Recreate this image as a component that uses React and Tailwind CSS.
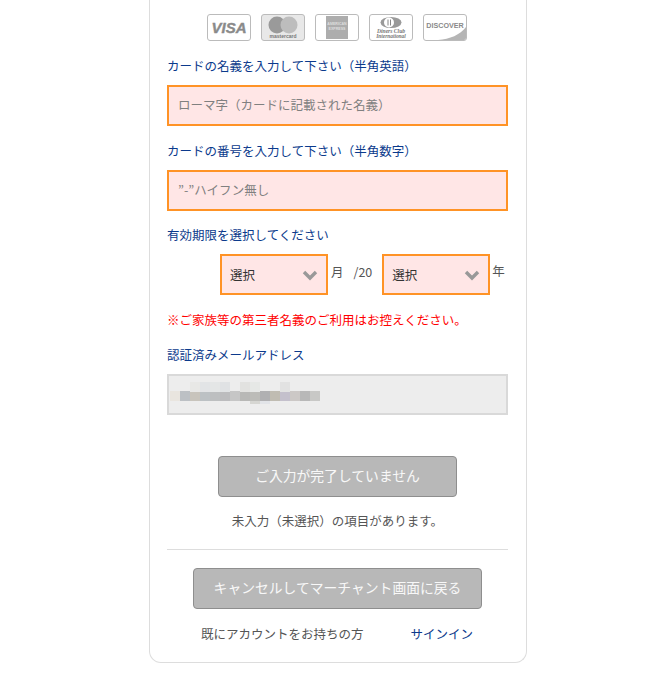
const FONT = "font-['Noto_Sans_CJK_JP','Liberation_Sans',sans-serif]";

const CardFrame = ({ children, bg = 'bg-white' }) => (
  <div className={`w-11 h-[27px] border border-[#bbb] rounded-[3px] ${bg}`}>
    <svg width="42" height="25" viewBox="0 0 42 25" className="block">{children}</svg>
  </div>
);

const CardLogos = () => (
  <div className="flex justify-center gap-[10px] pr-[2px]">
    <CardFrame>
      <text x="21" y="18" textAnchor="middle" fontFamily="Liberation Sans" fontWeight="700" fontStyle="italic" fontSize="15" stroke="#8a8a8a" strokeWidth="0.4" fill="#8a8a8a">VISA</text>
    </CardFrame>
    <CardFrame bg="bg-[#e8e8e8]">
      <circle cx="15" cy="10" r="8.5" fill="#9a9a9a" />
      <circle cx="27" cy="10" r="8.5" fill="#bdbdbd" />
      <text x="21" y="22.5" textAnchor="middle" fontFamily="Liberation Sans" fontWeight="700" fontSize="5" fill="#777">mastercard</text>
    </CardFrame>
    <CardFrame>
      <rect x="10" y="1" width="22" height="23" fill="#adadad" />
      <text x="21" y="10" textAnchor="middle" fontFamily="Liberation Sans" fontWeight="700" fontSize="3.6" fill="#dedede">AMERICAN</text>
      <text x="21" y="15" textAnchor="middle" fontFamily="Liberation Sans" fontWeight="700" fontSize="3.6" fill="#dedede">EXPRESS</text>
    </CardFrame>
    <CardFrame>
      <ellipse cx="21" cy="7.5" rx="10.5" ry="5.5" fill="#9a9a9a" />
      <circle cx="19" cy="7.5" r="5" fill="#fff" />
      <rect x="17.5" y="4.5" width="1" height="6" fill="#888" />
      <rect x="20" y="4.5" width="1" height="6" fill="#888" />
      <text x="21" y="18" textAnchor="middle" fontFamily="Liberation Serif" fontStyle="italic" fontWeight="700" fontSize="5.6" fill="#777">Diners Club</text>
      <text x="21" y="23" textAnchor="middle" fontFamily="Liberation Serif" fontStyle="italic" fontWeight="700" fontSize="5.4" fill="#777">International</text>
    </CardFrame>
    <CardFrame>
      <path d="M42 12 V23 Q42 25 40 25 H14 C26 24 36 20 42 12 Z" fill="#b5b5b5" />
      <text x="21" y="12.5" textAnchor="middle" fontFamily="Liberation Sans" fontWeight="700" fontSize="7.2" fill="#8a8a8a">DISCOVER</text>
    </CardFrame>
  </div>
);

const Label = ({ children, className = '' }) => (
  <p className={`text-[12.5px] leading-5 text-[#0b3a8c] ${className}`}>{children}</p>
);

const TextField = ({ placeholder }) => (
  <input
    placeholder={placeholder}
    className="block w-full h-[41px] pl-[9px] pb-[2px] border-2 border-[#ff9326] bg-[#ffe6e6] text-[12.5px] outline-none placeholder:text-[#808080]"
  />
);

const SelectBox = () => (
  <div className="flex items-center justify-between w-[108px] h-[41px] pl-[8px] pr-[7px] border-2 border-[#ff9326] bg-[#ffe6e6] text-[12.5px] text-[#333]">
    <span>選択</span>
    <svg width="18" height="12" viewBox="0 0 18 12" fill="none">
      <path d="M3 3 L9 9 L15 3" stroke="#999" strokeWidth="3.4" />
    </svg>
  </div>
);

// blurred out address in the picture
const MOSAIC = [
  [0, 9, 10, '#e9e5df'], [10, 9, 10, '#bcc0c4'], [20, 9, 10, '#c8c4bc'], [30, 9, 10, '#bcc1c4'],
  [40, 9, 10, '#bdbfc0'], [50, 9, 10, '#bcbcbe'], [60, 9, 10, '#c6c6c6'], [70, 9, 10, '#b8b8b6'],
  [80, 9, 10, '#bcbcb8'], [90, 9, 10, '#b0b0b2'], [100, 9, 10, '#c0bcb2'], [110, 9, 10, '#c4c0cc'],
  [120, 9, 10, '#ccc8c6'], [130, 9, 10, '#b8b8b8'], [140, 9, 10, '#c8c8c6'],
  [20, 0, 10, '#e8e8e6'], [30, 0, 10, '#e2e4e6'], [40, 0, 10, '#e4e6e6'], [50, 0, 10, '#e0e2e4'],
  [70, 0, 10, '#e2e2e0'], [80, 0, 10, '#e6e8e6'], [110, 0, 10, '#e2e2e2'],
];

const BlurredEmail = () => (
  <svg width="160" height="26" viewBox="0 0 160 26" className="block">
    {MOSAIC.map(([x, y, w, c]) => (
      <rect key={`${x}-${y}`} x={x} y={y} width={w} height="10" fill={c} />
    ))}
    <rect x="80" y="19" width="10" height="3" fill="#d6d6d2" />
    <rect x="90" y="19" width="10" height="3" fill="#e2e4e8" />
  </svg>
);

const GrayButton = ({ children, className = '' }) => (
  <button className={`h-[41px] pb-[2px] rounded-[4px] border border-[#8e8e8e] bg-[#b8b8b8] text-[13.8px] text-[#f8f8f8] ${className}`}>
    {children}
  </button>
);

export default function App() {
  return (
    <div className={`min-h-[680px] bg-white ${FONT}`}>
      <div className="w-[378px] h-[663px] ml-[149px] pl-[17px] pr-[18px] pt-[14px] border border-t-0 border-[#ddd] rounded-b-[12px]">
        <CardLogos />

        <Label className="mt-[15px] mb-[9px]">カードの名義を入力して下さい（半角英語）</Label>
        <TextField placeholder="ローマ字（カードに記載された名義）" />

        <Label className="mt-[15px] mb-[9px]">カードの番号を入力して下さい（半角数字）</Label>
        <TextField placeholder="”-”ハイフン無し" />

        <Label className="mt-[14px]">有効期限を選択してください</Label>
        <div className="flex items-start mt-[9px] ml-[53px] text-[12.5px] leading-5 text-[#555]">
          <SelectBox />
          <span className="ml-[3px] mt-[8px]">月</span>
          <span className="ml-[10px] mt-[8px]">/20</span>
          <span className="ml-[10px]"><SelectBox /></span>
          <span className="ml-[2px] mt-[7px]">年</span>
        </div>

        <p className="mt-[15px] text-[12.5px] leading-5 text-[#ff0000]">※ご家族等の第三者名義のご利用はお控えください。</p>

        <Label className="mt-[15px] mb-[9px]">認証済みメールアドレス</Label>
        <div className="flex items-center h-[41px] pl-[1px] border-2 border-[#d9d9d9] bg-[#ededed]">
          <BlurredEmail />
        </div>

        <div className="flex justify-center mt-[41px]">
          <GrayButton className="w-[239px]">ご入力が完了していません</GrayButton>
        </div>
        <p className="mt-[14px] text-center text-[12.5px] leading-5 text-[#555]">未入力（未選択）の項目があります。</p>

        <hr className="mt-[18px] border-[#ddd]" />

        <div className="flex justify-center mt-[18px]">
          <GrayButton className="w-[289px]">キャンセルしてマーチャント画面に戻る</GrayButton>
        </div>

        <div className="flex mt-[15px] ml-[34px] text-[12.5px] leading-5 text-[#555]">
          <span>既にアカウントをお持ちの方</span>
          <span className="ml-[47px] text-[#0b3a8c]">サインイン</span>
        </div>
      </div>
    </div>
  );
}
